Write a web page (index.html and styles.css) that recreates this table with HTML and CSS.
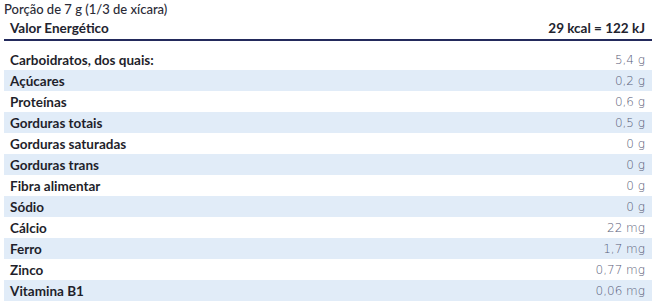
FILE: index.html
```html
<!DOCTYPE html>
<html lang="pt">
<head>
<meta charset="utf-8">
<link rel="stylesheet" href="styles.css">
</head>
<body>
<div class="nutri">
  <div class="portion">Porção de 7 g (1/3 de xícara)</div>
  <div class="energy">
    <span>Valor Energético</span>
    <span>29 kcal = 122 kJ</span>
  </div>
  <div class="rows">
    <div class="row"><span class="label">Carboidratos, dos quais:</span><span class="value">5,4 g</span></div>
    <div class="row alt"><span class="label">Açúcares</span><span class="value">0,2 g</span></div>
    <div class="row"><span class="label">Proteínas</span><span class="value">0,6 g</span></div>
    <div class="row alt"><span class="label">Gorduras totais</span><span class="value">0,5 g</span></div>
    <div class="row"><span class="label">Gorduras saturadas</span><span class="value">0 g</span></div>
    <div class="row alt"><span class="label">Gorduras trans</span><span class="value">0 g</span></div>
    <div class="row"><span class="label">Fibra alimentar</span><span class="value">0 g</span></div>
    <div class="row alt"><span class="label">Sódio</span><span class="value">0 g</span></div>
    <div class="row"><span class="label">Cálcio</span><span class="value">22 mg</span></div>
    <div class="row alt"><span class="label">Ferro</span><span class="value">1,7 mg</span></div>
    <div class="row"><span class="label">Zinco</span><span class="value">0,77 mg</span></div>
    <div class="row alt"><span class="label">Vitamina B1</span><span class="value">0,06 mg</span></div>
  </div>
</div>
</body>
</html>
```
FILE: styles.css
```css
html, body {
  margin: 0;
  padding: 0;
  background: #ffffff;
}
body {
  font-family: "Lato", "Open Sans", sans-serif;
  color: #1f1f2b;
}
.nutri {
  width: 648px;
  margin-left: 4px;
  padding-top: 1px;
}
.portion {
  font-size: 13px;
  line-height: 16px;
  font-weight: 500;
  color: #2a2a36;
}
.energy {
  display: flex;
  justify-content: space-between;
  padding: 3px 7px 3px 6px;
  font-size: 13.5px;
  font-weight: 700;
  line-height: 16px;
  border-bottom: 2px solid #232a5c;
  color: #22232e;
}
.rows {
  margin-top: 8px;
}
.row {
  display: flex;
  justify-content: space-between;
  align-items: center;
  height: 21px;
  padding: 0 7px 0 6px;
}
.row.alt {
  background: #e1ecf8;
}
.label {
  font-size: 13.5px;
  font-weight: 700;
  color: #1f1f2b;
}
.value {
  font-family: "DejaVu Sans", sans-serif;
  font-weight: 300;
  font-size: 12px;
  color: #585c78;
}
```
